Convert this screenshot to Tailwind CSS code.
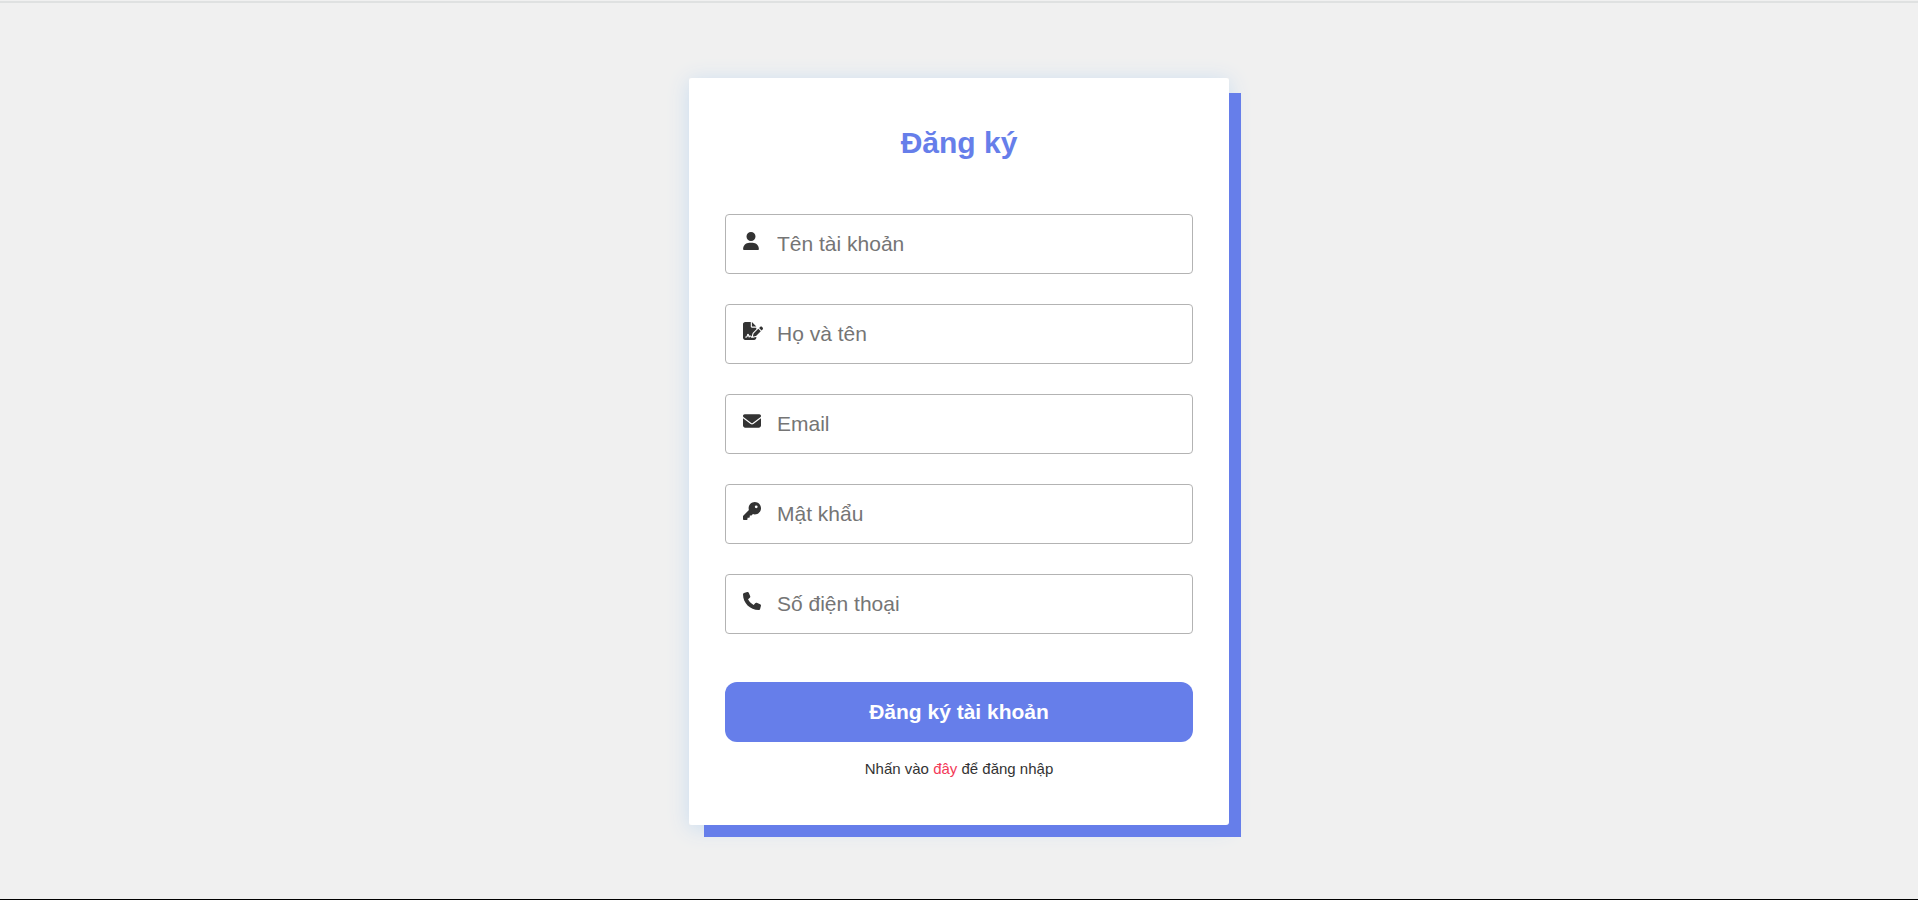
<!DOCTYPE html>
<html lang="vi">
<head>
<meta charset="utf-8">
<meta name="viewport" content="width=device-width, initial-scale=1">
<title>Đăng ký</title>
<script src="https://cdn.jsdelivr.net/npm/@tailwindcss/browser@4"></script>
</head>
<body class="flex min-h-screen flex-col border-b border-black bg-[#f0f0f0] font-['Liberation_Sans',Arial,sans-serif] text-[#333]">
<header class="mt-px h-0.5 bg-[#dfe1e1]"></header>
<main class="flex grow items-center justify-center px-4 pt-[17px] pb-4">
  <div class="relative isolate w-full max-w-[540px]">
    <div class="absolute top-[15px] left-[15px] -right-3 -bottom-3 -z-10 bg-[#667eea]"></div>
    <div class="absolute inset-0 -z-20 shadow-[0_3px_20px_0_#c8dcf0]"></div>
    <form class="flex flex-col rounded-[3px] bg-white px-9 pt-[49px] pb-[46px]">
      <h1 class="text-center text-[30px] leading-8 font-bold text-[#667eea]">Đăng ký</h1>
      <div class="mt-[55px] flex flex-col gap-[30px]">
        <label class="flex h-[60px] cursor-text rounded-[4px] border border-[#b3b3b3]">
          <span class="flex h-[52px] w-[51px] shrink-0 items-center pl-[17px]"><svg class="h-[18px] w-4" viewBox="0 0 448 512" fill="currentColor" aria-hidden="true"><path d="M224 256A128 128 0 1 0 224 0a128 128 0 1 0 0 256zm-45.700 48C79.800 304 0 383.800 0 482.300C0 498.700 13.300 512 29.700 512H418.300c16.400 0 29.700-13.300 29.700-29.700C448 383.800 368.200 304 269.700 304H178.300z"/></svg></span>
          <input type="text" aria-label="Tên tài khoản" placeholder="Tên tài khoản" class="min-w-0 grow bg-transparent text-[21px] outline-none placeholder:text-[#757575]">
        </label>
        <label class="flex h-[60px] cursor-text rounded-[4px] border border-[#b3b3b3]">
          <span class="flex h-[52px] w-[51px] shrink-0 items-center pl-[17px]"><svg class="h-[18px] w-5 shrink-0" viewBox="0 0 576 512" fill="currentColor" aria-hidden="true"><path d="M64 0C28.700 0 0 28.700 0 64V448c0 35.300 28.700 64 64 64H320c35.300 0 64-28.700 64-64V428.700c-2.700 1.100-5.400 2-8.200 2.700l-60.100 15c-3 .7-6 1.200-9 1.400c-.9 .1-1.800 .2-2.700 .2H240c-6.100 0-11.600-3.400-14.300-8.800l-8.800-17.700c-1.700-3.400-5.100-5.500-8.800-5.500s-7.200 2.100-8.800 5.500l-8.800 17.700c-2.900 5.900-9.200 9.400-15.700 8.800s-12.100-5.100-13.900-11.300L144 381l-9.800 32.800c-6.100 20.300-24.800 34.200-46 34.200H80c-8.800 0-16-7.200-16-16s7.200-16 16-16h8.200c7.100 0 13.300-4.600 15.300-11.400l14.900-49.500c3.400-11.300 13.800-19.100 25.600-19.100s22.200 7.800 25.600 19.100l11.600 38.600c7.400-6.200 16.800-9.700 26.800-9.700c15.900 0 30.400 9 37.500 23.200l4.400 8.800h8.900c-3.100-8.800-3.700-18.400-1.400-27.800l15-60.100c2.800-11.300 8.600-21.500 16.800-29.700L384 203.600V160H256c-17.700 0-32-14.300-32-32V0H64zM256 0V128H384L256 0zM549.800 139.700c-15.600-15.600-40.900-15.600-56.600 0l-29.400 29.400 71 71 29.400-29.400c15.600-15.600 15.600-40.900 0-56.600l-14.400-14.400zM311.900 321c-4.100 4.100-7 9.200-8.400 14.900l-15 60.100c-1.400 5.500 .2 11.200 4.200 15.200s9.700 5.600 15.200 4.200l60.100-15c5.600-1.400 10.800-4.300 14.900-8.400L512.100 262.700l-71-71L311.900 321z"/></svg></span>
          <input type="text" aria-label="Họ và tên" placeholder="Họ và tên" class="min-w-0 grow bg-transparent text-[21px] outline-none placeholder:text-[#757575]">
        </label>
        <label class="flex h-[60px] cursor-text rounded-[4px] border border-[#b3b3b3]">
          <span class="flex h-[52px] w-[51px] shrink-0 items-center pl-[17px]"><svg class="size-[18px]" viewBox="0 0 512 512" fill="currentColor" aria-hidden="true"><path d="M48 64C21.500 64 0 85.500 0 112c0 15.100 7.100 29.300 19.200 38.400L236.800 313.600c11.400 8.500 27 8.500 38.400 0L492.800 150.400c12.100-9.100 19.200-23.300 19.200-38.400c0-26.500-21.500-48-48-48H48zM0 176V384c0 35.300 28.700 64 64 64H448c35.300 0 64-28.700 64-64V176L294.400 339.200c-22.800 17.100-54 17.100-76.800 0L0 176z"/></svg></span>
          <input type="email" aria-label="Email" placeholder="Email" class="min-w-0 grow bg-transparent text-[21px] outline-none placeholder:text-[#757575]">
        </label>
        <label class="flex h-[60px] cursor-text rounded-[4px] border border-[#b3b3b3]">
          <span class="flex h-[52px] w-[51px] shrink-0 items-center pl-[17px]"><svg class="size-[18px]" viewBox="0 0 512 512" fill="currentColor" aria-hidden="true"><path d="M336 352c97.200 0 176-78.800 176-176S433.200 0 336 0S160 78.800 160 176c0 18.700 2.900 36.800 8.300 53.700L7 391c-4.500 4.500-7 10.600-7 17v80c0 13.300 10.700 24 24 24h80c13.300 0 24-10.700 24-24V448h40c13.300 0 24-10.700 24-24V384h40c6.400 0 12.500-2.500 17-7l33.300-33.300c16.900 5.400 35 8.300 53.700 8.300zM376 96a40 40 0 1 1 0 80 40 40 0 1 1 0-80z"/></svg></span>
          <input type="password" aria-label="Mật khẩu" placeholder="Mật khẩu" class="min-w-0 grow bg-transparent text-[21px] outline-none placeholder:text-[#757575]">
        </label>
        <label class="flex h-[60px] cursor-text rounded-[4px] border border-[#b3b3b3]">
          <span class="flex h-[52px] w-[51px] shrink-0 items-center pl-[17px]"><svg class="size-[18px]" viewBox="0 0 512 512" fill="currentColor" aria-hidden="true"><path d="M164.900 24.600c-7.700-18.600-28-28.500-47.400-23.200l-88 24C12.100 30.200 0 46 0 64C0 311.400 200.600 512 448 512c18 0 33.800-12.100 38.600-29.500l24-88c5.300-19.400-4.600-39.700-23.200-47.400l-96-40c-16.300-6.800-35.200-2.100-46.300 11.600L304.700 368C234.300 334.700 177.300 277.700 144 207.300L193.300 167c13.700-11.200 18.400-30 11.600-46.300l-40-96z"/></svg></span>
          <input type="tel" aria-label="Số điện thoại" placeholder="Số điện thoại" class="min-w-0 grow bg-transparent text-[21px] outline-none placeholder:text-[#757575]">
        </label>
      </div>
      <button type="submit" class="mt-12 h-[60px] rounded-xl bg-[#667eea] text-[21px] font-bold text-white">Đăng ký tài khoản</button>
      <p class="mt-[17px] text-center text-[15px] leading-5">Nhấn vào <a href="#" class="text-[#f33a58]">đây</a> để đăng nhập</p>
    </form>
  </div>
</main>
</body>
</html>
